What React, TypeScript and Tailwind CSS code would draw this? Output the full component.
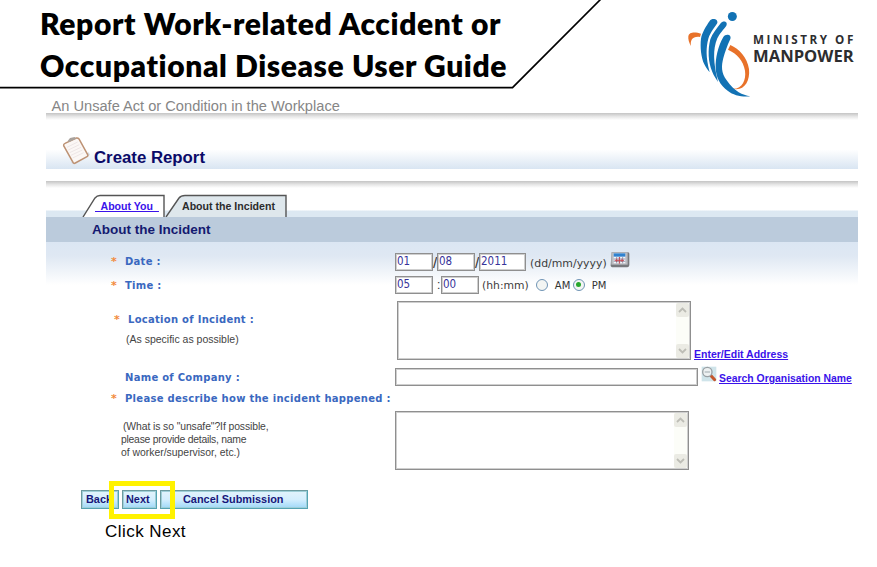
import type { ReactNode } from "react";

const verdana = "font-['DejaVu_Sans',sans-serif]";

function Logo() {
  return (
    <svg className="h-[110px] w-[207px] shrink-0" viewBox="0 0 621 330">
      <g fill="#1272b4">
        <circle cx="187" cy="49.5" r="13.5" />
        <path d="M119 63 C125 53 145 56 142 69 C139 75 120 98 115 116 C108 142 107 170 119 217 C112 208 107 202 103 193 C93 172 90 140 93 116 C96 98 109 77 119 63Z" />
        <path d="M152 70 C159 60 175 64 169 77 C161 88 147 103 142 115 C128 149 130 187 144 246 C139 238 131 227 127 216 C114 186 113 149 121 118 C127 101 141 84 152 70Z" />
        <path d="M160 111 C167 100 186 104 181 117 C171 138 165 156 160 174 C154 198 153 218 170 241 C182 258 194 269 206 277 C217 284 229 287 241 289 C217 292 190 286 174 273 C150 255 138 233 137 204 C136 174 144 138 160 111Z" />
      </g>
      <g fill="#e8722a">
        <path d="M93 101 C78 96 57 94 55 109 C54 118 57 128 63 138 C60 120 68 108 90 111Z" />
        <path d="M181 135 C208 146 232 174 237 207 C241 247 220 274 189 266 C216 267 229 241 225 212 C220 182 201 161 174 149Z" />
      </g>
      <g fill="#2d2d2f" fontFamily="'Open Sans', sans-serif" fontWeight="700">
        <text x="249" y="131" fontSize="35" textLength="301" lengthAdjust="spacing">MINISTRY OF</text>
        <text x="249" y="186" fontSize="50" textLength="302" lengthAdjust="spacingAndGlyphs">MANPOWER</text>
      </g>
    </svg>
  );
}

function Clipboard() {
  return (
    <svg className="h-[30px] w-[30px]" viewBox="0 0 90 90">
      <path d="M27 82 L84 60 L80 52 L34 88Z" fill="#d4dae2" />
      <path d="M5 32 Q4 27 9 25 L43 9 Q48 8 51 12 L77 59 Q79 63 75 65 L40 84 Q35 87 33 82Z" fill="#fbf7f5" stroke="#bd9274" strokeWidth="4.5" />
      <g stroke="#e6dcde" strokeWidth="2">
        <path d="M15 37 L47 21M19 45 L52 29M23 53 L57 37M27 61 L61 45M32 69 L65 53" />
      </g>
      <path d="M17 18 L24 9 L38 6 L42 11 L22 21Z" fill="#a9a29c" />
    </svg>
  );
}

function CalendarIcon() {
  return (
    <svg className="h-[17px] w-[20px]" viewBox="0 0 60 51">
      <path d="M5 1 H54 Q59 2 58 8 V40 Q57 46 52 46 H6 Q1 44 2 39Z" fill="#77797d" />
      <path d="M4 1 H53 V38 H4Z" fill="#b9bbc0" />
      <path d="M11 4 H46 V34 H11Z" fill="#f4f4f8" />
      <path d="M11 4 H46 V14 H11Z" fill="#2f82cf" />
      <path d="M20 15V34M29 15V34M38 15V34M11 21H46M11 28H46" stroke="#8791a8" strokeWidth="2.5" />
      <path d="M28 15V35M14 25H42M20 20V30M36 20V30" stroke="#c54b55" strokeWidth="3" />
    </svg>
  );
}

function Magnifier() {
  return (
    <svg className="mt-px h-[16px] w-[16px] shrink-0" viewBox="0 0 48 48">
      <path d="M2 2H46V46H2Z" fill="#cfe4ea" />
      <path d="M30 29 L41 41" stroke="#c4562c" strokeWidth="9" strokeLinecap="round" />
      <circle cx="19" cy="18" r="14" fill="#edf1f2" stroke="#9aa0a4" strokeWidth="4" />
      <path d="M11 18H27" stroke="#b3bbbf" strokeWidth="4" />
    </svg>
  );
}

function Field({ value, className }: { value: string; className: string }) {
  return (
    <div className={`flex h-[18px] shrink-0 items-center border border-[#8f8f8f] bg-white pl-px font-['DejaVu_Sans_Condensed','DejaVu_Sans',sans-serif] text-[11.5px] leading-none text-[#37339a] inset-ring inset-ring-[#cfcfcf] ${className}`}>
      {value}
    </div>
  );
}

function Arrow({ down = false }: { down?: boolean }) {
  return (
    <div className="flex h-[14px] w-[13px] items-center justify-center rounded-[2px] bg-[#ebebe4]">
      <svg className="h-[6px] w-[9px]" viewBox="0 0 9 6" fill="none" stroke="#bdbdb6" strokeWidth="1.8">
        <path d={down ? "M1 1 L4.5 4.5 L8 1" : "M1 5 L4.5 1.5 L8 5"} />
      </svg>
    </div>
  );
}

function TextBox() {
  return (
    <div className="flex h-[59px] w-[294px] shrink-0 justify-end border border-[#8f8f8f] bg-white p-px inset-ring inset-ring-[#cfcfcf]">
      <div className="flex flex-col justify-between bg-[#fcfdf8]">
        <Arrow />
        <Arrow down />
      </div>
    </div>
  );
}

function Label({ children, required = false, className = "" }: { children: ReactNode; required?: boolean; className?: string }) {
  return (
    <div className={`flex ${className}`}>
      <span className={`${verdana} w-[15px] shrink-0 pl-px text-[11px] font-bold leading-[14px] text-[#f28a3c]`}>{required ? "*" : ""}</span>
      <span className={`${verdana} whitespace-nowrap text-[10px] font-bold leading-[14px] tracking-[0.28px] text-[#3a68c0]`}>{children}</span>
    </div>
  );
}

function Radio({ checked = false }: { checked?: boolean }) {
  return (
    <span className="flex size-[12px] items-center justify-center rounded-full border-[1.5px] border-[#6f94b5] bg-[#f3f5f3]">
      {checked && <span className="size-[5px] rounded-full bg-[#28a72d]" />}
    </span>
  );
}

function Button({ children, className }: { children: string; className: string }) {
  return (
    <div className={`flex h-[19px] items-center whitespace-nowrap border border-[#55a3b3] border-t-[#6d9a9f] border-l-[#6d9a9f] bg-linear-to-b from-[#e2f3fc] via-[#d4eefd] to-[#9fd8f8] text-[10.9px] font-bold leading-none text-[#17177a] inset-ring inset-ring-[#9fcfd8] ${className}`}>
      {children}
    </div>
  );
}

function Rule() {
  return <div className="h-[7px] bg-linear-to-b from-[#c4c4c4] via-[#e6e6e6] to-white" />;
}

export default function App() {
  return (
    <div className="h-[567px] w-[877px] overflow-hidden bg-white font-['Liberation_Sans',Arial,sans-serif]">
      <header className="relative flex h-[95px] justify-between">
        <svg className="absolute left-0 top-0 h-[95px] w-[610px]" viewBox="0 0 610 95" fill="none" stroke="#000" strokeWidth="1.7">
          <path d="M0 87.6 H512.5 L600.5 -0.5" />
        </svg>
        <h1 className="whitespace-nowrap pl-[40px] pt-[2px] font-['Lato',sans-serif] text-[30px] font-extrabold leading-[42px] tracking-[0.6px] text-black">
          <span className="block">Report Work-related Accident or</span>
          <span className="block">Occupational Disease User Guide</span>
        </h1>
        <Logo />
      </header>

      <main className="ml-[46px] w-[812px]">
        <p className="h-[18px] whitespace-nowrap pl-[5.5px] pt-[1px] text-[14.63px] leading-[20px] text-[#868686]">An Unsafe Act or Condition in the Workplace</p>
        <Rule />
        <div className="flex h-[49px] bg-linear-to-b from-white from-60% to-[#d9e5f2] pl-[16px] pt-[15px]">
          <Clipboard />
          <h2 className="ml-[2px] mt-[13px] text-[16.8px] font-bold leading-[20px] text-[#0a0a68]">Create Report</h2>
        </div>
        <div className="h-[12px]" />
        <Rule />
        <div className="h-[6px]" />

        <nav className="flex h-[23px] bg-[linear-gradient(to_bottom,white_16px,#dce8f2_17px)] pl-[36px]">
          <div className="relative h-[23px] w-[83px]">
            <svg className="absolute inset-0 h-[23px] w-[83px]" viewBox="0 0 83 23" fill="#fff" stroke="#555" strokeWidth="1.4">
              <path d="M1 23 L13 4 Q15 1.5 18 1.5 H82 V23" />
            </svg>
            <span className="relative ml-[13px] block w-[63px] whitespace-pre pt-[6px] text-[10.6px] font-bold leading-[13px] text-[#3a12ea] underline">{"  About You  "}</span>
          </div>
          <div className="relative h-[23px] w-[123px]">
            <svg className="absolute inset-0 h-[23px] w-[123px]" viewBox="0 0 123 23" fill="#dee7ec" stroke="#555" strokeWidth="1.4">
              <path d="M1 23 L14 4 Q16 1.5 20 1.5 H121 V23" />
            </svg>
            <span className="relative block whitespace-nowrap pl-[17px] pt-[6px] text-[10.6px] font-bold leading-[13px] text-[#2c2c2c]">About the Incident</span>
          </div>
        </nav>
        <h3 className="h-[25px] bg-[#bbcbdc] pl-[46px] text-[13.5px] font-bold leading-[25px] text-[#141a70]">About the Incident</h3>

        <section className="h-[239px] bg-[linear-gradient(to_bottom,#dbe6f3_0px,#dfe8f3_14px,white_43px)]">
          <div className="flex h-[33px] items-start pl-[64px] pt-[11px]">
            <Label required className="mt-[2px] w-[285px]">Date :</Label>
            <Field value="01" className="w-[38px]" />
            <span className="w-[4px] text-[15px] leading-[19px] text-[#333]">/</span>
            <Field value="08" className="w-[38px]" />
            <span className="w-[4px] text-[15px] leading-[19px] text-[#333]">/</span>
            <Field value="2011" className="w-[47px]" />
            <span className={`${verdana} ml-[4px] w-[80px] text-[10.9px] leading-[21px] text-[#3c3c3c]`}>(dd/mm/yyyy)</span>
            <div className="-mt-[1px]"><CalendarIcon /></div>
          </div>
          <div className="flex h-[26px] items-start pl-[64px] pt-px">
            <Label required className="mt-[3px] w-[285px]">Time :</Label>
            <Field value="05" className="w-[38px]" />
            <span className="w-[8px] pl-[4px] text-[12px] leading-[19px] text-[#333]">:</span>
            <Field value="00" className="w-[38px]" />
            <span className={`${verdana} ml-[3px] text-[10.8px] leading-[20px] text-[#3c3c3c]`}>(hh:mm)</span>
            <div className={`${verdana} mt-[1px] flex items-center text-[10px] leading-[13px] text-[#333]`}>
              <span className="ml-[7px]"><Radio /></span>
              <span className="ml-[7px] w-[18px] pt-[2px]">AM</span>
              <Radio checked />
              <span className="ml-[7px] pt-[2px]">PM</span>
            </div>
          </div>
          <div className="flex h-[67px] items-start pl-[67px]">
            <div className="w-[284px] pt-[12px]">
              <Label required>Location of Incident :</Label>
              <p className="mt-[6px] whitespace-nowrap pl-[13px] text-[10.5px] leading-[13px] text-[#444]">(As specific as possible)</p>
            </div>
            <TextBox />
            <a className="ml-[3px] mt-[47px] whitespace-nowrap text-[10.5px] font-bold leading-[13px] text-[#3a12ea] underline">Enter/Edit Address</a>
          </div>
          <div className="flex h-[21px] items-start pl-[64px]">
            <Label className="mt-[3px] w-[285px]">Name of Company :</Label>
            <div className="h-[18px] w-[303px] shrink-0 border border-[#8f8f8f] bg-white inset-ring inset-ring-[#cfcfcf]" />
            <div className="ml-[3px] -mt-[3px]"><Magnifier /></div>
            <a className="ml-[2px] mt-[4px] whitespace-nowrap text-[10.4px] font-bold leading-[13px] text-[#3a12ea] underline">Search Organisation Name</a>
          </div>
          <div className="h-[22px] pl-[64px] pt-[3px]">
            <Label required>Please describe how the incident happened :</Label>
          </div>
          <div className="flex items-start">
            <p className="w-[349px] pl-[75px] pt-[9px] text-[10.4px] leading-[13px] text-[#444]">
              <span className="block pl-[2px] tracking-[-0.1px]">(What is so "unsafe"?If possible,</span>
              <span className="block tracking-[-0.25px]">please provide details, name</span>
              <span className="block">of worker/supervisor, etc.)</span>
            </p>
            <TextBox />
          </div>
        </section>

        <footer className="relative pl-[35px] pt-[9px]">
          <div className="flex gap-[3px]">
            <Button className="w-[38px] pl-[4px]">Back</Button>
            <Button className="w-[35px] pl-[3px]">Next</Button>
            <Button className="w-[148px] pl-[22px]">Cancel Submission</Button>
          </div>
          <div className="absolute left-[63px] top-0 h-[38px] w-[66px] border-[5px] border-[#fff200]" />
          <p className="ml-[24px] mt-[13px] text-[17px] leading-[20px] tracking-[0.45px] text-black">Click Next</p>
        </footer>
      </main>
    </div>
  );
}
